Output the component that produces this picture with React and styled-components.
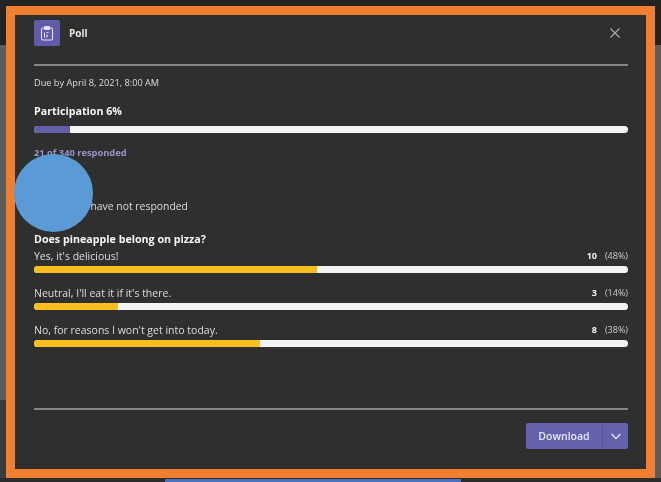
import { createGlobalStyle, styled } from "styled-components";

const GlobalStyle = createGlobalStyle`
  html, body {
    margin: 0;
    height: 100%;
    overflow: hidden;
  }
  body {
    background:
      linear-gradient(#3a3c3c, #3a3c3c) 0 400px / 6px 78px no-repeat,
      linear-gradient(#232323 0 45px, #5c5c5c 45px 478px, #2c2c2c 478px);
    font-family: "Open Sans", "Noto Sans", sans-serif;
  }
`;

const Screen = styled.div`
  position: relative;
  width: 661px;
  height: 482px;
  padding: 6px;
  box-sizing: border-box;
`;

const Dialog = styled.div`
  width: 649px;
  height: 472px;
  box-sizing: border-box;
  border: 9px solid #f08030;
  background: #2f2f2f;
  padding: 5px 18px 0 19px;
  display: flex;
  flex-direction: column;
  color: #e8e8e8;
  filter: blur(0.35px);
`;

const Header = styled.div`
  display: flex;
  align-items: center;
  height: 26px;
  gap: 9px;
`;

const AppIcon = styled.div`
  width: 26px;
  height: 26px;
  border-radius: 2px;
  background: #5f5ba8;
  display: flex;
  align-items: center;
  justify-content: center;
`;

const Name = styled.div`
  font-size: 10px;
  font-weight: 700;
  flex: 1;
`;

const Close = styled.svg`
  width: 12px;
  height: 12px;
  margin-right: 7px;
`;

const Divider = styled.div`
  height: 2px;
  background: #858585;
  margin-top: ${(p) => p.$top}px;
`;

const Due = styled.div`
  font-size: 9.2px;
  line-height: 14px;
  margin-top: 10px;
  color: #dcdcdc;
`;

const Heading = styled.div`
  font-size: 10.7px;
  font-weight: 700;
  line-height: 16px;
  margin-top: ${(p) => p.$top}px;
  color: #f6f6f6;
`;

const Track = styled.div`
  height: 7px;
  border-radius: 4px;
  background: #f4f4f4;
  overflow: hidden;
  margin-top: ${(p) => p.$top}px;
`;

const Fill = styled.div`
  height: 100%;
  background: ${(p) => p.$color};
`;

const Responded = styled.div`
  font-size: 9.3px;
  font-weight: 700;
  line-height: 12px;
  margin-top: 14px;
  color: #9794cc;
`;

const NotResponded = styled.div`
  font-size: 10.4px;
  line-height: 16px;
  margin-top: 39px;
  color: #dcdcdc;
`;

const OptionRow = styled.div`
  display: flex;
  align-items: center;
  justify-content: space-between;
  font-size: 10.5px;
  line-height: 14px;
  margin-top: ${(p) => p.$top}px;
  color: #dedede;
`;

const Count = styled.div`
  font-size: 9px;
  display: flex;
  gap: 8px;
`;

const Votes = styled.span`
  font-weight: 700;
  color: #f4f4f4;
`;

const Percent = styled.span`
  color: #cccccc;
`;

const Footer = styled.div`
  display: flex;
  justify-content: flex-end;
  margin-top: 13px;
`;

const SplitButton = styled.div`
  display: flex;
  height: 26px;
  width: 102px;
  border-radius: 2px;
  overflow: hidden;
  background: #6562ad;
  color: #e6e6f2;
`;

const DownloadLabel = styled.div`
  flex: 1;
  display: flex;
  align-items: center;
  justify-content: center;
  font-size: 10.5px;
  font-weight: 600;
`;

const Caret = styled.div`
  width: 25px;
  border-left: 1px solid #57549a;
  display: flex;
  align-items: center;
  justify-content: center;
`;

const Redaction = styled.div`
  position: absolute;
  left: 14px;
  top: 154px;
  width: 79px;
  height: 78px;
  border-radius: 50%;
  background: #5b9bd5;
`;

const BottomBar = styled.div`
  position: absolute;
  left: 165px;
  bottom: 0;
  width: 296px;
  height: 3px;
  background: #4a70c0;
`;

const options = [
  { label: "Yes, it's delicious!", votes: 10, pct: 48, width: 47.6 },
  { label: "Neutral, I'll eat it if it's there.", votes: 3, pct: 14, width: 14.2 },
  { label: "No, for reasons I won't get into today.", votes: 8, pct: 38, width: 38 },
];

export default function App() {
  return (
    <Screen>
      <GlobalStyle />
      <Dialog>
        <Header>
          <AppIcon>
            <svg width="16" height="16" viewBox="0 0 16 16" fill="none" stroke="#e2e2f4" strokeWidth="1.1">
              <rect x="2.5" y="3" width="11" height="12" rx="1.5" />
              <rect x="5.5" y="1.5" width="5" height="3" rx="0.8" fill="#e2e2f4" />
              <path d="M5.5 12.5V7.5M7.5 7.5h2M8 12.5v-3" />
            </svg>
          </AppIcon>
          <Name>Poll</Name>
          <Close viewBox="0 0 12 12" fill="none" stroke="#a8a8a8" strokeWidth="1.2">
            <path d="M1.5 1.5l9 9M10.5 1.5l-9 9" />
          </Close>
        </Header>
        <Divider $top={18} />
        <Due>Due by April 8, 2021, 8:00 AM</Due>
        <Heading $top={13}>Participation 6%</Heading>
        <Track $top={7}>
          <Fill $color="#625fa8" style={{ width: "6%" }} />
        </Track>
        <Responded>21 of 340 responded</Responded>
        <NotResponded>319 people have not responded</NotResponded>
        <Heading $top={17}>Does pineapple belong on pizza?</Heading>
        {options.map((o, i) => (
          <div key={o.label}>
            <OptionRow $top={i === 0 ? 2 : 13}>
              {o.label}
              <Count>
                <Votes>{o.votes}</Votes>
                <Percent>({o.pct}%)</Percent>
              </Count>
            </OptionRow>
            <Track $top={3}>
              <Fill $color="#f7be1c" style={{ width: `${o.width}%` }} />
            </Track>
          </div>
        ))}
        <Divider $top={61} />
        <Footer>
          <SplitButton>
            <DownloadLabel>Download</DownloadLabel>
            <Caret>
              <svg width="12" height="12" viewBox="0 0 12 12" fill="none" stroke="#e6e6f2" strokeWidth="1.3">
                <path d="M1.5 4l4.5 4.5L10.5 4" />
              </svg>
            </Caret>
          </SplitButton>
        </Footer>
      </Dialog>
      <Redaction />
      <BottomBar />
    </Screen>
  );
}
